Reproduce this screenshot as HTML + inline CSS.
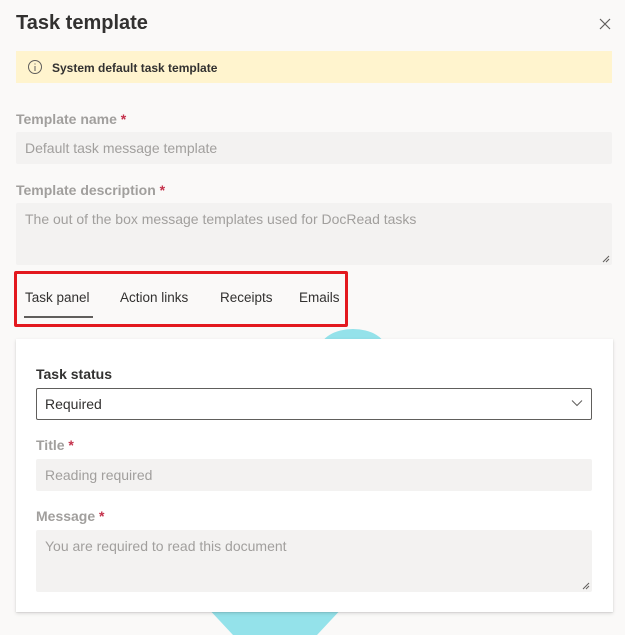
<!DOCTYPE html>
<html><head><style>
*{box-sizing:border-box;margin:0;padding:0}
body{width:625px;height:630px;background:#faf9f8;font-family:"Liberation Sans",sans-serif;position:relative;overflow:hidden;color:#323130}
.a{position:absolute}
.lbl{font-size:14px;font-weight:bold;color:#a19f9d}
.lbl span{color:#c4314b}
.in{background:#f3f2f1;border-radius:2px;font-size:14px;color:#a19f9d;padding:0 9px}
.tab{font-size:13.5px}
</style></head><body>
<div class="a" style="left:16px;top:12px;font-size:20px;font-weight:600;color:#323130">Task template</div>
<svg class="a" style="left:599px;top:18px" width="12" height="12"><path d="M1 1L11 11M11 1L1 11" stroke="#605e5c" stroke-width="1.2"/></svg>
<div class="a" style="left:16px;top:51px;width:596px;height:32px;background:#fff4ce"></div>
<svg class="a" style="left:27px;top:59px" width="16" height="16"><circle cx="8" cy="8" r="6.5" fill="none" stroke="#605e5c"/><path d="M8 7v5M8 4.5v1" stroke="#605e5c"/></svg>
<div class="a" style="left:52px;top:61px;font-size:12px;font-weight:bold">System default task template</div>
<div class="a lbl" style="left:16px;top:111px">Template name <span>*</span></div>
<div class="a in" style="left:16px;top:132px;width:596px;height:32px;line-height:32px">Default task message template</div>
<div class="a lbl" style="left:16px;top:182px">Template description <span>*</span></div>
<div class="a in" style="left:16px;top:203px;width:596px;height:62px;padding-top:8px">The out of the box message templates used for DocRead tasks</div>
<svg class="a" style="left:602px;top:255px" width="8" height="8"><path d="M1 7L7 1M4 7L7 4" stroke="#605e5c"/></svg>
<div class="a" style="left:14px;top:271px;width:334px;height:56px;border:3px solid #e3191f;border-radius:2px"></div>
<div class="a tab" style="left:25px;top:290px">Task panel</div>
<div class="a" style="left:24px;top:316px;width:69px;height:2px;background:#605e5c"></div>
<div class="a tab" style="left:120px;top:290px">Action links</div>
<div class="a tab" style="left:220px;top:290px">Receipts</div>
<div class="a tab" style="left:299px;top:290px">Emails</div>
<div class="a" style="left:320px;top:329px;width:66px;height:40px;border-radius:50%;background:#94e2ea"></div>
<div class="a" style="left:205px;top:605px;width:140px;height:30px;background:#94e2ea;clip-path:polygon(0 0,100% 0,80% 100%,20% 100%)"></div>
<div class="a" style="left:16px;top:339px;width:597px;height:273px;background:#fff;box-shadow:0 1.6px 3.6px rgba(0,0,0,.13),0 .3px .9px rgba(0,0,0,.11)"></div>
<div class="a" style="left:36px;top:366px;font-size:14px;font-weight:600">Task status</div>
<div class="a" style="left:36px;top:388px;width:556px;height:32px;border:1px solid #605e5c;border-radius:2px;font-size:14px;line-height:30px;padding-left:8px">Required</div>
<svg class="a" style="left:571px;top:399px" width="12" height="8"><path d="M1 1.5L6 6.5L11 1.5" fill="none" stroke="#605e5c"/></svg>
<div class="a lbl" style="left:36px;top:437px">Title <span>*</span></div>
<div class="a in" style="left:36px;top:459px;width:556px;height:32px;line-height:32px">Reading required</div>
<div class="a lbl" style="left:36px;top:508px">Message <span>*</span></div>
<div class="a in" style="left:36px;top:530px;width:556px;height:62px;padding-top:8px">You are required to read this document</div>
<svg class="a" style="left:582px;top:582px" width="8" height="8"><path d="M1 7L7 1M4 7L7 4" stroke="#605e5c"/></svg>
</body></html>
